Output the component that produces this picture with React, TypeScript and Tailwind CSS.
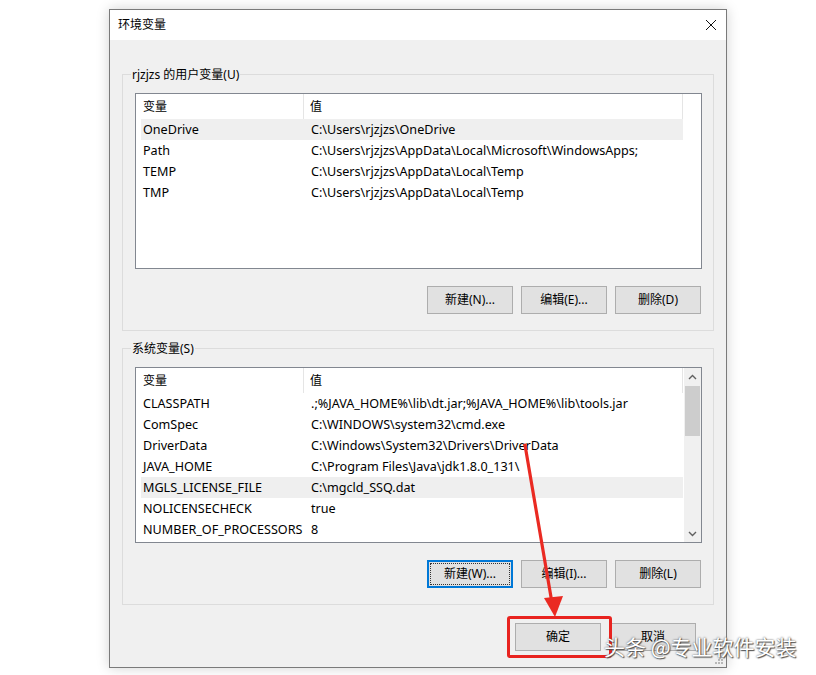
import React from "react";

const font = { fontFamily: '"Noto Sans", "Noto Sans CJK SC", sans-serif' };

type Row = [string, string];

const userRows: Row[] = [
  ["OneDrive", "C:\\Users\\rjzjzs\\OneDrive"],
  ["Path", "C:\\Users\\rjzjzs\\AppData\\Local\\Microsoft\\WindowsApps;"],
  ["TEMP", "C:\\Users\\rjzjzs\\AppData\\Local\\Temp"],
  ["TMP", "C:\\Users\\rjzjzs\\AppData\\Local\\Temp"],
];

const sysRows: Row[] = [
  ["CLASSPATH", ".;%JAVA_HOME%\\lib\\dt.jar;%JAVA_HOME%\\lib\\tools.jar"],
  ["ComSpec", "C:\\WINDOWS\\system32\\cmd.exe"],
  ["DriverData", "C:\\Windows\\System32\\Drivers\\DriverData"],
  ["JAVA_HOME", "C:\\Program Files\\Java\\jdk1.8.0_131\\"],
  ["MGLS_LICENSE_FILE", "C:\\mgcld_SSQ.dat"],
  ["NOLICENSECHECK", "true"],
  ["NUMBER_OF_PROCESSORS", "8"],
];

function Header() {
  return (
    <div className="flex h-[25px] bg-white">
      <div className="flex w-[168px] items-center border-r border-[#e5e5e5] pl-[7px]">变量</div>
      <div className="flex w-[379px] items-center border-r border-[#e5e5e5] pl-[6px]">值</div>
    </div>
  );
}

function Rows({ rows, hi }: { rows: Row[]; hi: number }) {
  return (
    <div className="flex flex-col text-[12.6px]">
      {rows.map(([k, v], i) => (
        <div
          key={k}
          className={
            "ml-[5px] flex h-[21px] w-[542px] items-center whitespace-nowrap pt-[2px] " +
            (i === hi ? "bg-[#efefef]" : "")
          }
        >
          <div className="w-[170px] pl-[2px]">{k}</div>
          <div>{v}</div>
        </div>
      ))}
    </div>
  );
}

function Btn({ label, focus }: { label: string; focus?: boolean }) {
  return (
    <div
      className={
        "relative flex h-[28px] w-[86px] items-center justify-center bg-[#e1e1e1] " +
        (focus ? "border-2 border-[#0078d7]" : "border border-[#adadad]")
      }
    >
      {focus && <span className="absolute inset-[1px] border border-dotted border-[#333]" />}
      {label}
    </div>
  );
}

function Group({ title, children }: { title: string; children: React.ReactNode }) {
  return (
    <div className="relative h-[257px] border border-[#dcdcdc] pl-[12px] pt-[18px]">
      <span className="absolute left-[8px] top-[-8px] bg-[#f0f0f0] px-[1px] leading-[16px]">{title}</span>
      {children}
    </div>
  );
}

function Chevron({ up }: { up?: boolean }) {
  return (
    <svg width="9" height="6" viewBox="0 0 9 6">
      <path
        d={up ? "M1 5 L4.5 1.5 L8 5" : "M1 1 L4.5 4.5 L8 1"}
        fill="none"
        stroke="#606060"
        strokeWidth="1.4"
      />
    </svg>
  );
}

export default function App() {
  return (
    <div className="relative h-[675px] w-[816px] overflow-hidden bg-white text-[12px] text-black" style={font}>
      <div className="pl-[109px] pt-[9px]">
        <div className="relative flex h-[659px] w-[618px] flex-col border border-[#7a7a7a] shadow-[0_0_12px_rgba(0,0,0,0.18)]">
          {/* title bar */}
          <div className="flex h-[30px] items-center justify-between bg-white pl-[8px] pr-[9px]">
            <span>环境变量</span>
            <svg width="12" height="12" viewBox="0 0 12 12">
              <path d="M1 1 L11 11 M11 1 L1 11" stroke="#111" strokeWidth="1" />
            </svg>
          </div>
          {/* body */}
          <div className="flex flex-1 flex-col bg-[#f0f0f0] px-[12px] pt-[34px]">
            <Group title="rjzjzs 的用户变量(U)">
              <div className="h-[176px] w-[567px] border border-[#828790] bg-white">
                <Header />
                <Rows rows={userRows} hi={0} />
              </div>
              <div className="mt-[17px] flex w-[567px] justify-end gap-[8px] pr-[1px]">
                <Btn label="新建(N)..." />
                <Btn label="编辑(E)..." />
                <Btn label="删除(D)" />
              </div>
            </Group>
            <div className="mt-[17px]">
              <Group title="系统变量(S)">
                <div className="flex h-[176px] w-[567px] border border-[#828790] bg-white">
                  <div className="w-[548px] overflow-hidden">
                    <Header />
                    <Rows rows={sysRows} hi={4} />
                  </div>
                  <div className="flex w-[17px] flex-col bg-[#f0f0f0]">
                    <div className="flex h-[17px] items-center justify-center">
                      <Chevron up />
                    </div>
                    <div className="mx-[1px] mt-[1px] h-[50px] bg-[#cdcdcd]" />
                    <div className="flex-1" />
                    <div className="flex h-[17px] items-center justify-center">
                      <Chevron />
                    </div>
                  </div>
                </div>
                <div className="mt-[17px] flex w-[567px] justify-end gap-[8px] pr-[1px]">
                  <Btn label="新建(W)..." focus />
                  <Btn label="编辑(I)..." />
                  <Btn label="删除(L)" />
                </div>
              </Group>
            </div>
            <div className="mt-[18px] flex justify-end gap-[9px] pr-[18px]">
              <Btn label="确定" />
              <Btn label="取消" />
            </div>
          </div>
          {/* resize grip */}
          <svg className="absolute bottom-[2px] right-[2px]" width="10" height="10" viewBox="0 0 10 10">
            <g fill="#b8b8b8">
              <rect x="7" y="1" width="2" height="2" />
              <rect x="4" y="4" width="2" height="2" />
              <rect x="7" y="4" width="2" height="2" />
              <rect x="1" y="7" width="2" height="2" />
              <rect x="4" y="7" width="2" height="2" />
              <rect x="7" y="7" width="2" height="2" />
            </g>
          </svg>
        </div>
      </div>

      {/* red highlight rectangle */}
      <div className="pointer-events-none absolute left-[507px] top-[616px] h-[42px] w-[105px] rounded-[3px] border-[3px] border-[#e8231f]" />

      {/* red arrow */}
      <svg className="pointer-events-none absolute left-0 top-0" width="816" height="675" viewBox="0 0 816 675">
        <line x1="525" y1="445" x2="552" y2="603" stroke="#ea2a22" strokeWidth="3.2" strokeLinecap="round" />
        <path d="M544 598 L563 596 L555 617 Z" fill="#ea2a22" />
      </svg>

      {/* watermark */}
      <div
        className="pointer-events-none absolute left-[604px] top-[631px] whitespace-nowrap text-[21px] leading-[30px] text-white [text-shadow:0_0_2px_#444,1px_1px_1px_#555]"
        style={{ fontFamily: '"Noto Sans CJK SC", "Noto Sans", sans-serif' }}
      >
        头条 @专业软件安装
      </div>
    </div>
  );
}
